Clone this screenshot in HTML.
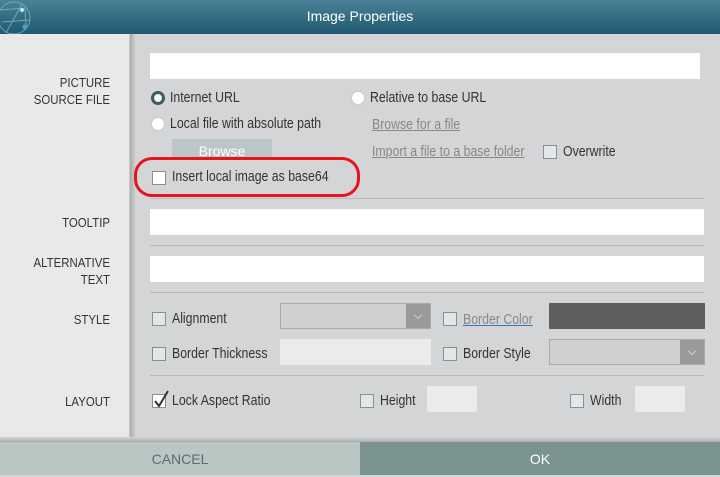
<!DOCTYPE html>
<html><head><style>
*{box-sizing:border-box;margin:0;padding:0}
body{width:720px;height:475px;overflow:hidden;font-family:"Liberation Sans",sans-serif;font-size:13px;color:#333;background:#d4d5d7;position:relative}
.a{position:absolute}
.hdr{left:0;top:0;width:720px;height:34px;background:linear-gradient(#4a8196,#1f5a70);color:#fff;text-align:center;line-height:33px;font-size:14px}
.left{left:0;top:34px;width:130px;height:408px;background:#e9e9e9;border-right:1px solid #c8c8c8}
.shadow{left:130px;top:34px;width:6px;height:408px;background:linear-gradient(90deg,#aaa,#d4d5d7)}
.lbl{width:110px;text-align:right;font-size:13px;color:#333;line-height:17px;transform:scaleX(.88);transform-origin:right}
.in{background:#fff}
.cb{width:14px;height:14px;border:1px solid #8a8e90;background:#e3e7e8}
.rd{width:14px;height:14px;border-radius:50%;background:#fff;border:1px solid #ccc}
.rd.on{background:#eee;border:3px solid #3e5c62}
.rd.on::after{content:"";position:absolute;left:1px;top:1px;width:6px;height:6px;border-radius:50%;background:#fff}
.t{white-space:nowrap;line-height:16px;font-size:15px;transform:scaleX(.82);transform-origin:left}
.lnk{color:#888;text-decoration:underline}
.hr{height:1px;background:#b8babc;left:150px;width:554px}
.sel{border:1px solid #aaa;background:#d0d0d0}
.sel i{position:absolute;right:0;top:0;width:24px;height:100%;background:#9a9a9a}
.sel i::after{content:"";position:absolute;left:9px;top:8px;width:5px;height:5px;border-right:1px solid #ccc;border-bottom:1px solid #ccc;transform:rotate(45deg)}
.box{background:#eaebec}
</style></head><body>
<div class="a hdr">Image Properties</div>
<svg class="a" style="left:0;top:0" width="34" height="34"><g fill="none" stroke="#7fb4c8" stroke-width="1" opacity=".8"><circle cx="14" cy="18" r="16"/><path d="M0 10 L25 8 L26 27 M6 33 L22 4 M2 22 L30 20"/></g><circle cx="22" cy="10" r="2" fill="#9fd"/><circle cx="25" cy="27" r="2.5" fill="#4a9fd0"/></svg>
<div class="a left"></div><div class="a shadow"></div>
<div class="a lbl" style="left:0;top:74px">PICTURE<br>SOURCE FILE</div>
<div class="a lbl" style="left:0;top:214px">TOOLTIP</div>
<div class="a lbl" style="left:0;top:254px">ALTERNATIVE<br>TEXT</div>
<div class="a lbl" style="left:0;top:311px">STYLE</div>
<div class="a lbl" style="left:0;top:393px">LAYOUT</div>

<div class="a in" style="left:150px;top:53px;width:550px;height:26px"></div>
<div class="a rd on" style="left:151px;top:91px"></div><div class="a t" style="left:170px;top:90px">Internet URL</div>
<div class="a rd" style="left:351px;top:91px"></div><div class="a t" style="left:370px;top:90px">Relative to base URL</div>
<div class="a rd" style="left:151px;top:117px"></div><div class="a t" style="left:170px;top:116px">Local file with absolute path</div>
<div class="a t lnk" style="left:372px;top:117px">Browse for a file</div>
<div class="a" style="left:172px;top:139px;width:100px;height:20px;background:#bcc6c6;color:#fff;text-align:center;line-height:24px;font-size:14px">Browse</div>
<div class="a t lnk" style="left:372px;top:144px">Import a file to a base folder</div>
<div class="a cb" style="left:543px;top:145px"></div><div class="a t" style="left:563px;top:144px">Overwrite</div>
<div class="a" style="left:134px;top:157px;width:226px;height:40px;border:3px solid #e8141c;border-radius:18px"></div>
<div class="a cb" style="left:152px;top:171px;background:#fff"></div><div class="a t" style="left:172px;top:169px">Insert local image as base64</div>

<div class="a hr" style="top:198px"></div>
<div class="a in" style="left:150px;top:209px;width:554px;height:26px"></div>
<div class="a hr" style="top:245px"></div>
<div class="a in" style="left:150px;top:256px;width:554px;height:26px"></div>
<div class="a hr" style="top:292px"></div>

<div class="a cb" style="left:152px;top:312px"></div><div class="a t" style="left:172px;top:311px">Alignment</div>
<div class="a sel" style="left:280px;top:303px;width:151px;height:26px"><i></i></div>
<div class="a cb" style="left:443px;top:312px"></div><div class="a t lnk" style="left:463px;top:312px;text-decoration-color:#3a7ab8">Border Color</div>
<div class="a" style="left:549px;top:303px;width:156px;height:26px;background:#5d5f5f"></div>
<div class="a cb" style="left:152px;top:347px"></div><div class="a t" style="left:172px;top:346px">Border Thickness</div>
<div class="a box" style="left:280px;top:339px;width:151px;height:26px"></div>
<div class="a cb" style="left:443px;top:347px"></div><div class="a t" style="left:463px;top:346px">Border Style</div>
<div class="a sel" style="left:549px;top:339px;width:156px;height:26px"><i></i></div>
<div class="a hr" style="top:375px"></div>

<div class="a cb" style="left:152px;top:394px;background:#fff"></div>
<svg class="a" style="left:152px;top:389px" width="18" height="20"><path d="M3 12 L7 17 L16 2" fill="none" stroke="#333" stroke-width="2"/></svg>
<div class="a t" style="left:172px;top:393px">Lock Aspect Ratio</div>
<div class="a cb" style="left:360px;top:394px"></div><div class="a t" style="left:380px;top:393px">Height</div>
<div class="a box" style="left:427px;top:386px;width:50px;height:26px"></div>
<div class="a cb" style="left:570px;top:394px"></div><div class="a t" style="left:590px;top:393px">Width</div>
<div class="a box" style="left:635px;top:386px;width:50px;height:26px"></div>

<div class="a" style="left:0;top:437px;width:720px;height:5px;background:linear-gradient(#d4d5d7,#a9acad)"></div>
<div class="a" style="left:0;top:442px;width:360px;height:33px;background:#b9c6c4;color:#5d6b6a;text-align:center;line-height:35px;font-size:14px">CANCEL</div>
<div class="a" style="left:360px;top:442px;width:360px;height:33px;background:#7a9391;color:#fff;text-align:center;line-height:35px;font-size:14px">OK</div>
</body></html>
